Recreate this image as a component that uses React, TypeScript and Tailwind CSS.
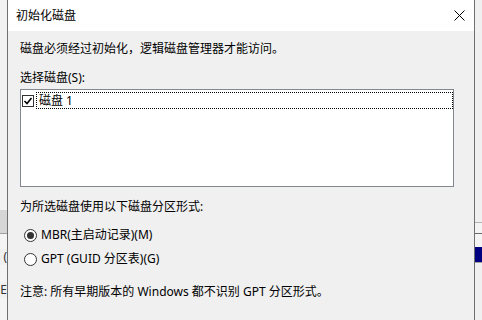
import React from 'react';

const font = {
  fontFamily: '"Noto Sans", "Noto Sans CJK SC", sans-serif',
};

function Checkbox() {
  return (
    <span className="flex h-[12px] w-[12px] shrink-0 items-center justify-center border border-[#333333] bg-white">
      <svg width="10" height="10" viewBox="0 0 10 10">
        <path d="M1.5 5 L4 7.5 L8.5 2" fill="none" stroke="#000" strokeWidth="1.6" />
      </svg>
    </span>
  );
}

function Radio({ checked, label }: { checked?: boolean; label: string }) {
  return (
    <div className="ml-[4px] flex h-[16px] items-center gap-[4px]">
      <span className="flex h-[13px] w-[13px] shrink-0 items-center justify-center rounded-full border border-[#333333] bg-white">
        {checked && <span className="h-[7px] w-[7px] rounded-full bg-[#333333]" />}
      </span>
      <span className="leading-[16px]">{label}</span>
    </div>
  );
}

export default function App() {
  return (
    <div
      className="flex h-[320px] w-[482px] overflow-hidden bg-[#f0f0f0] text-[12px] text-[#000000]"
      style={font}
    >
      {/* background window, left side */}
      <div className="flex w-[7px] shrink-0 flex-col">
        <div className="h-[210px] bg-[#f2f2f2]" />
        <div className="h-[23px] bg-[#d6d6d6]" />
        <div className="h-[1px] bg-[#a0a0a0]" />
        <div className="h-[15px] bg-[#f4f4f4]" />
        <div className="flex h-[16px] justify-end overflow-hidden whitespace-nowrap leading-[16px] text-[#333]">
          E (
        </div>
        <div className="h-[17px] bg-[#f4f4f4]" />
        <div className="flex h-[16px] justify-end overflow-hidden whitespace-nowrap leading-[16px] text-[#333]">
          GE
        </div>
        <div className="flex-1 bg-[#f4f4f4]" />
      </div>

      {/* dialog */}
      <div className="flex w-[468px] shrink-0 flex-col border-x border-[#6f6f6f] bg-[#f0f0f0]">
        <div className="flex h-[31px] items-center justify-between bg-white pl-[8px] pr-[9px]">
          <span className="leading-[16px]">初始化磁盘</span>
          <svg width="11" height="11" viewBox="0 0 11 11">
            <path d="M0.5 0.5 L10.5 10.5 M10.5 0.5 L0.5 10.5" stroke="#000" strokeWidth="1" />
          </svg>
        </div>

        <div className="flex flex-col pl-[12px] pt-[10px]">
          <div className="h-[16px] leading-[16px]">磁盘必须经过初始化，逻辑磁盘管理器才能访问。</div>
          <div className="mt-[13px] h-[16px] leading-[16px]">选择磁盘(S):</div>

          <div className="mt-[3px] h-[98px] w-[434px] border border-[#828790] bg-white pt-[2px]">
            <div className="flex items-center pl-[1px]">
              <Checkbox />
              <div className="ml-[2px] flex h-[17px] flex-1 items-center border border-dotted border-black pl-[2px] leading-[16px]">
                磁盘 1
              </div>
            </div>
          </div>

          <div className="mt-[12px] h-[16px] leading-[16px]">为所选磁盘使用以下磁盘分区形式:</div>
          <div className="mt-[12px]">
            <Radio checked label="MBR(主启动记录)(M)" />
          </div>
          <div className="mt-[8px]">
            <Radio label="GPT (GUID 分区表)(G)" />
          </div>
          <div className="mt-[17px] h-[16px] leading-[16px]">
            注意: 所有早期版本的 Windows 都不识别 GPT 分区形式。
          </div>
        </div>
      </div>

      {/* background window, right side */}
      <div className="flex w-[7px] shrink-0 flex-col">
        <div className="h-[222px] bg-[#f0f0f0]" />
        <div className="h-[1px] bg-[#b4b4b4]" />
        <div className="h-[10px] bg-[#f4f4f4]" />
        <div className="h-[1px] bg-[#6a6a6a]" />
        <div className="h-[13px] bg-[#f4f4f4]" />
        <div className="h-[15px] bg-[#000080]" />
        <div className="h-[1px] bg-[#a0a0a0]" />
        <div className="flex-1 bg-[#f0f0f0]" />
      </div>
    </div>
  );
}
